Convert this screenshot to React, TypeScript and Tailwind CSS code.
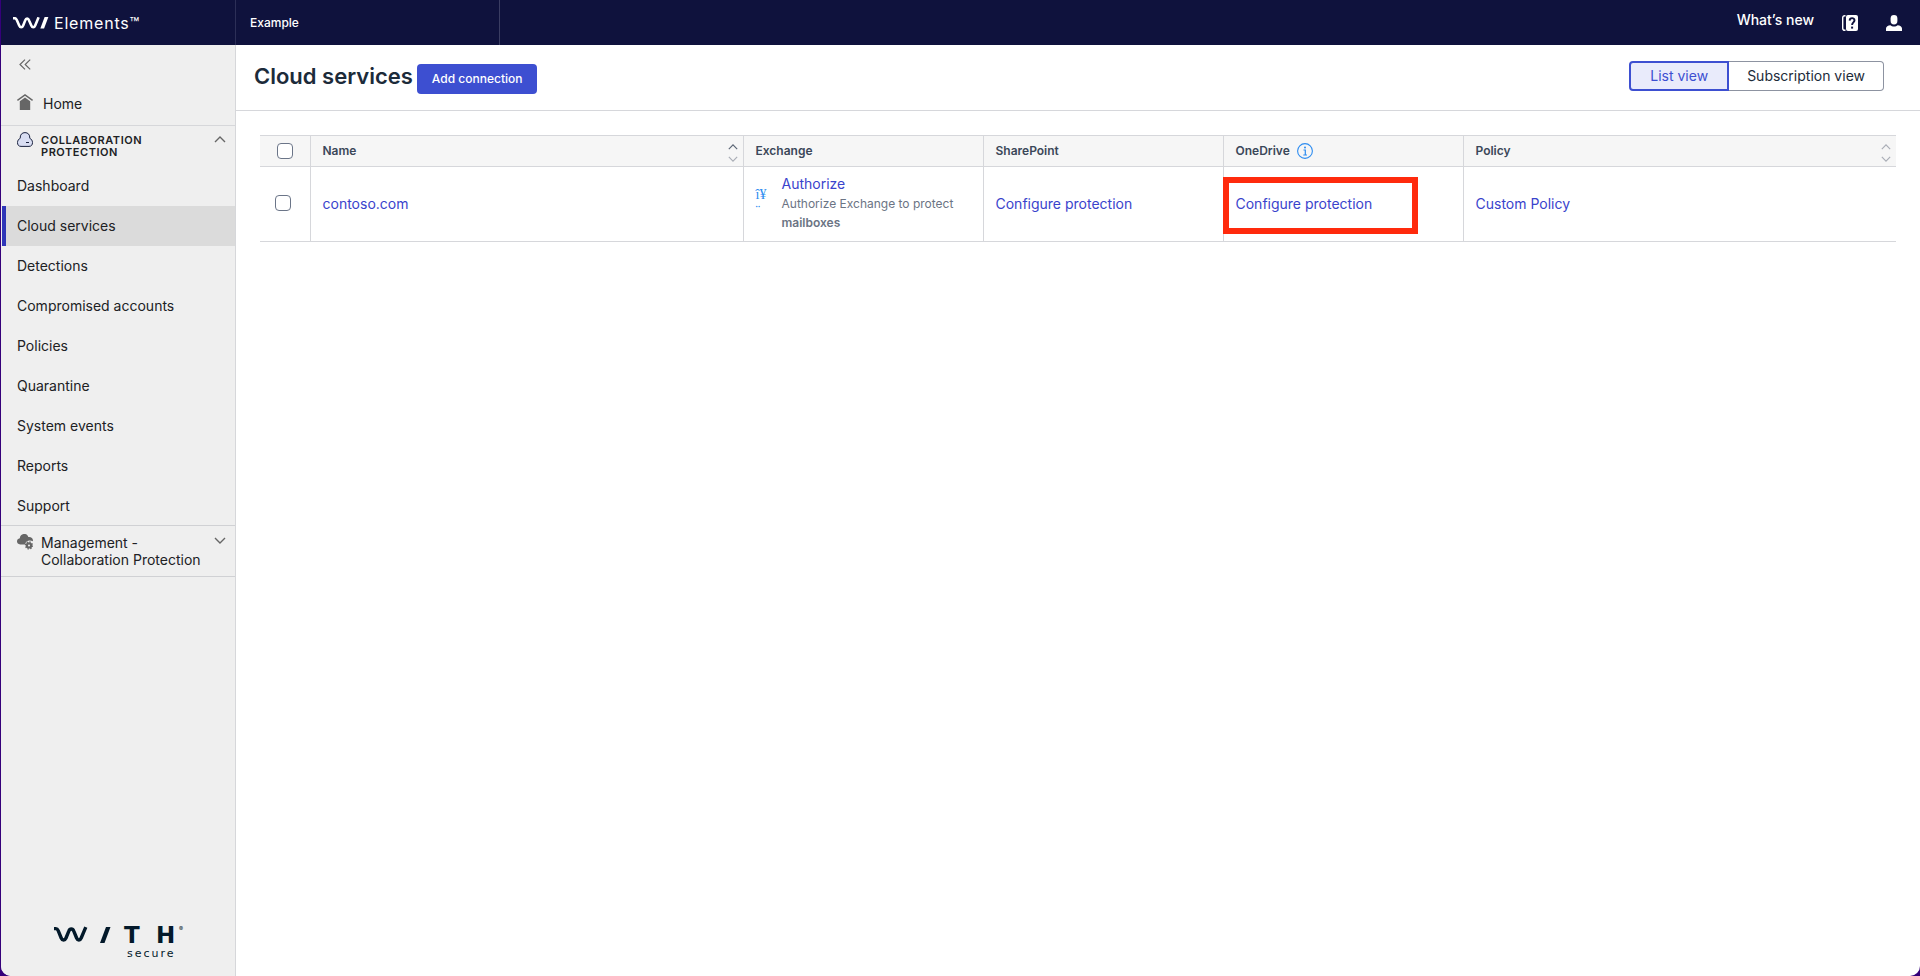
import React from "react";

const navItems = [
  "Dashboard",
  "Cloud services",
  "Detections",
  "Compromised accounts",
  "Policies",
  "Quarantine",
  "System events",
  "Reports",
  "Support",
];

const checkboxClass =
  "block size-4 appearance-none rounded-sm border border-[#6b7588] bg-white checked:bg-[#3d4fd1]";

const linkClass = "text-sm text-[#3a43cc] hover:underline";

const BrandMark: React.FC<{ className?: string }> = ({ className }) => (
  <svg viewBox="0 0 36 12" className={className} fill="none" aria-hidden="true">
    <path
      d="M0 1.2H1.6C2.8 1.2 3.2 1.8 3.8 3L6.2 8.4C7.2 10.8 9.2 10.8 10.2 8.4L12.2 3.4C13 1 15.2 1 16.1 3.4L18.3 8.4C19.3 10.8 21.2 10.8 22.2 8.4L25.6 .3"
      stroke="currentColor"
      strokeWidth="2.6"
    />
    <path d="M31.6 0H35.4L31.1 11.6H27.3Z" fill="currentColor" />
  </svg>
);

const Chevron: React.FC<{ up?: boolean; className?: string }> = ({
  up,
  className,
}) => (
  <svg viewBox="0 0 12 7" className={className} fill="none" aria-hidden="true">
    <path
      d={up ? "M1 6L6 1L11 6" : "M1 1L6 6L11 1"}
      stroke="currentColor"
      strokeWidth="1.4"
    />
  </svg>
);

const SortButton: React.FC<{ label: string; active?: boolean }> = ({
  label,
  active,
}) => (
  <button
    type="button"
    aria-label={label}
    className="flex flex-col items-center gap-1.5 pt-1 text-[#a9adb6]"
  >
    <Chevron
      up
      className={active ? "h-1.5 w-2.5 text-[#5b6575]" : "h-1.5 w-2.5"}
    />
    <Chevron className="h-1.5 w-2.5" />
  </button>
);

const Header: React.FC = () => (
  <header className="flex h-[45px] shrink-0 items-stretch bg-[#0f123d] text-white">
    <div className="flex w-[235px] items-center gap-[5px] border-r border-[#2c2f57] pl-3">
      <BrandMark className="h-3 w-9" />
      <span className="text-base leading-4 tracking-wider">
        Elements™
      </span>
    </div>
    <div className="flex w-[264px] items-center border-r border-[#3a3d62] pl-3.5 text-xs font-medium">
      Example
    </div>
    <div className="ml-auto flex items-center gap-7 pr-[18px]">
      <a href="#whats-new" className="pb-1.5 text-sm font-medium">
        What’s new
      </a>
      <button type="button" aria-label="Help">
        <svg viewBox="0 0 16 16" className="size-4" aria-hidden="true">
          <path
            d="M3.5 .7H2.8Q.7 .7 .7 2.8V13.2Q.7 15.3 2.8 15.3H3.5"
            fill="none"
            stroke="white"
            strokeWidth="1.4"
          />
          <rect x="4" width="12" height="16" rx="2" fill="white" />
          <path
            d="M7.6 5.6C7.7 2.3 12.6 2.4 12.5 5.4C12.4 7.4 10.1 7.4 10.1 10"
            fill="none"
            stroke="#0f123d"
            strokeWidth="1.9"
          />
          <rect x="9.1" y="11.6" width="2" height="2" fill="#0f123d" />
        </svg>
      </button>
      <button type="button" aria-label="Account">
        <svg viewBox="0 0 16 16" className="size-4" fill="white" aria-hidden="true">
          <rect x="4.6" y="0" width="6.8" height="9.4" rx="3.4" />
          <path d="M0 16V13.4C0 11.4 2 10.4 4.4 10.2C6 11.9 10 11.9 11.6 10.2C14 10.4 16 11.4 16 13.4V16Z" />
        </svg>
      </button>
    </div>
  </header>
);

const Sidebar: React.FC = () => (
  <aside className="flex w-[235px] shrink-0 flex-col border-r border-[#d6d7da] bg-[#efefef] text-sm text-[#202124]">
    <button
      type="button"
      aria-label="Collapse menu"
      className="flex h-[39px] items-center pl-[18px] text-[#666666]"
    >
      <svg viewBox="0 0 12 11" className="h-[11px] w-3" fill="none" aria-hidden="true">
        <path
          d="M6 .6L1 5.5L6 10.4M11.2 .6L6.2 5.5L11.2 10.4"
          stroke="currentColor"
          strokeWidth="1.2"
        />
      </svg>
    </button>
    <a
      href="#home"
      className="flex h-[42px] items-center gap-2.5 border-b border-[#d6d7da] pb-0.5 pl-4"
    >
      <svg viewBox="0 0 16 16" className="-mt-1 size-4" aria-hidden="true">
        <path d="M.4 6.4L8 1L15.6 6.4" fill="none" stroke="#666" strokeWidth="1.5" />
        <path d="M8 3.6L13.2 7.2V16H2.8V7.2Z" fill="#666" />
      </svg>
      Home
    </a>

    <button
      type="button"
      className="flex items-start pt-1.5 pr-[9px] pb-1.5 pl-4 text-left"
    >
      <svg viewBox="0 0 16 15" className="h-[15px] w-4" aria-hidden="true">
        <path
          d="M4 14.4C1.6 14.4 .5 12.8 .5 10.6C.5 8.400 1.800 7 3.200 6.300C3 2.600 5 .6 8 .6C11 .6 13 2.600 12.800 6.300C14.200 7 15.500 8.400 15.500 10.600C15.500 12.800 14.400 14.400 12 14.400Z"
          fill="#d9def3"
          stroke="#1b2340"
        />
        <path d="M9 10.5H12" stroke="#1b2340" />
      </svg>
      <span className="ml-2 flex-1 pt-0.5 text-[11px] leading-3 font-semibold tracking-wider">
        COLLABORATION
        <br />
        PROTECTION
      </span>
      <Chevron up className="mt-1 h-[7px] w-3 text-[#666666]" />
    </button>

    <nav className="pt-0.5">
      {navItems.map((item) => (
        <a
          key={item}
          href={`#${item.toLowerCase().replace(" ", "-")}`}
          className={
            item === "Cloud services"
              ? "ml-px flex h-10 items-center border-l-4 border-[#2f36b8] bg-[#dbdbdb] pl-[11px]"
              : "flex h-10 items-center pl-4 last:h-[39px]"
          }
        >
          {item}
        </a>
      ))}
    </nav>

    <button
      type="button"
      className="flex items-start border-y border-[#d0d1d4] py-2 pr-[9px] pl-4 text-left"
    >
      <svg viewBox="0 0 16 16" className="size-4" aria-hidden="true">
        <path
          d="M3.2 10.4C-1 10.4-1 4.8 2.8 4.3C3.2-1.3 10.6-1.3 11.3 3.1C14.2 2.6 16.4 4.7 15.9 7.2C12 5.4 8.8 7 8 10.4Z"
          fill="#666"
        />
        <circle cx="12" cy="11.4" r="2.1" fill="none" stroke="#666" strokeWidth="2.2" />
        <circle
          cx="12"
          cy="11.4"
          r="3.5"
          fill="none"
          stroke="#666"
          strokeWidth="1.3"
          strokeDasharray="1.37 1.37"
        />
      </svg>
      <span className="ml-2 flex-1 leading-[17px]">
        Management -
        <br />
        Collaboration Protection
      </span>
      <Chevron className="mt-[3px] h-[7px] w-3 text-[#666666]" />
    </button>

    <div className="mt-auto pb-[15px] pl-[53px] text-[#03192a]">
      <svg viewBox="0 0 140 44" className="h-11 w-[140px]" aria-label="WithSecure">
        <path
          d="M0 11.6H1.8C3 11.6 3.6 12.2 4.2 13.6L7.2 21C8.3 23.6 10.9 23.6 12 21L14.8 14.2C15.9 11.3 18.7 11.3 19.8 14.2L22.6 21C23.7 23.6 26.1 23.6 27.2 21L31.8 10.2"
          fill="none"
          stroke="currentColor"
          strokeWidth="3.4"
        />
        <path d="M52 10H56.5L50.5 26H46Z" fill="currentColor" />
        <text x="70" y="26" fill="currentColor" fontFamily="DejaVu Sans" fontSize="23" fontWeight="700">
          T
        </text>
        <text x="102" y="26" fill="currentColor" fontFamily="DejaVu Sans" fontSize="23" fontWeight="700">
          H
        </text>
        <text x="125" y="14" fill="currentColor" fontFamily="Inter" fontSize="6">
          ®
        </text>
        <text
          x="73"
          y="40"
          fill="currentColor"
          fontFamily="DejaVu Sans"
          fontSize="11"
          letterSpacing="2"
        >
          secure
        </text>
      </svg>
    </div>
  </aside>
);

const ServicesTable: React.FC = () => (
  <table className="w-full table-fixed border-collapse text-left">
    <colgroup>
      <col className="w-[50px]" />
      <col />
      <col className="w-60" />
      <col className="w-60" />
      <col className="w-60" />
      <col />
    </colgroup>
    <thead className="bg-[#f6f6f6] text-xs text-[#3b4759]">
      <tr className="h-[31px] border-y border-[#d6d7db] *:border-l *:border-[#d6d7db] *:pl-3 *:font-semibold *:first:border-l-0">
        <th scope="col">
          <input
            type="checkbox"
            aria-label="Select all"
            className={`${checkboxClass} ml-[5px]`}
          />
        </th>
        <th scope="col">
          <div className="flex items-center justify-between pr-[5px]">
            Name
            <SortButton label="Sort by name" active />
          </div>
        </th>
        <th scope="col">Exchange</th>
        <th scope="col">SharePoint</th>
        <th scope="col">
          <div className="flex items-center gap-[7px]">
            OneDrive
            <svg viewBox="0 0 16 16" className="size-4" fill="none" aria-hidden="true">
              <circle cx="8" cy="8" r="7.4" stroke="#2d8cf0" strokeWidth="1.1" />
              <path d="M6.5 7H8.3V12M6.3 12H10" stroke="#2d8cf0" strokeWidth="1.2" />
              <circle cx="8" cy="4.4" r="1" fill="#2d8cf0" />
            </svg>
          </div>
        </th>
        <th scope="col">
          <div className="flex items-center justify-between pr-[5px]">
            Policy
            <SortButton label="Sort by policy" />
          </div>
        </th>
      </tr>
    </thead>
    <tbody>
      <tr className="h-[75px] border-b border-[#d6d7db] *:border-l *:border-[#d6d7db] *:pb-0.5 *:pl-3 *:first:border-l-0">
        <td>
          <input
            type="checkbox"
            aria-label="Select contoso.com"
            className={`${checkboxClass} ml-[3px]`}
          />
        </td>
        <td>
          <a href="#contoso" className={linkClass}>
            contoso.com
          </a>
        </td>
        <td>
          <div className="flex items-center">
            <span className="w-[26px] font-['Liberation_Serif',serif] text-sm leading-4 text-[#2d8cf0]">
              î¥
              <br />
              ¨
            </span>
            <div className="text-xs leading-[19px] text-[#6b7484]">
              <a href="#authorize" className={linkClass}>
                Authorize
              </a>
              <p>Authorize Exchange to protect</p>
              <p className="font-semibold">mailboxes</p>
            </div>
          </div>
        </td>
        <td>
          <a href="#sharepoint" className={linkClass}>
            Configure protection
          </a>
        </td>
        <td className="relative">
          <a href="#onedrive" className={linkClass}>
            Configure protection
          </a>
          <div className="pointer-events-none absolute top-2.5 -left-px h-[57px] w-[195px] border-6 border-[#ff2a0d]" />
        </td>
        <td>
          <a href="#policy" className={linkClass}>
            Custom Policy
          </a>
        </td>
      </tr>
    </tbody>
  </table>
);

const App: React.FC = () => {
  return (
    <div className="min-h-screen bg-[#35007a] pl-px font-['Inter',sans-serif]">
      <div className="flex min-h-screen flex-col overflow-hidden rounded-b-[10px] bg-white">
        <Header />
        <div className="flex flex-1">
          <Sidebar />
          <main className="min-w-0 flex-1">
            <div className="flex h-[66px] items-center border-b border-[#d6d7db] pr-9 pl-[18px]">
              <h1 className="pb-0.5 text-[22px] font-semibold text-[#1c2b3a]">
                Cloud services
              </h1>
              <button
                type="button"
                className="mt-0.5 ml-1 h-[30px] rounded-sm bg-[#3d4fd1] px-[15px] text-xs font-medium text-white"
              >
                Add connection
              </button>
              <div className="mb-1 ml-auto flex h-[30px] text-sm">
                <button
                  type="button"
                  className="rounded-l-sm border-2 border-[#3d4fd1] bg-[#e9ebfb] px-[19px] text-[#3d4fd1]"
                >
                  List view
                </button>
                <button
                  type="button"
                  className="rounded-r-sm border border-l-0 border-[#8d93a1] px-[18px] text-[#1c2b3a]"
                >
                  Subscription view
                </button>
              </div>
            </div>
            <div className="px-6 pt-6">
              <ServicesTable />
            </div>
          </main>
        </div>
      </div>
    </div>
  );
};

export default App;
